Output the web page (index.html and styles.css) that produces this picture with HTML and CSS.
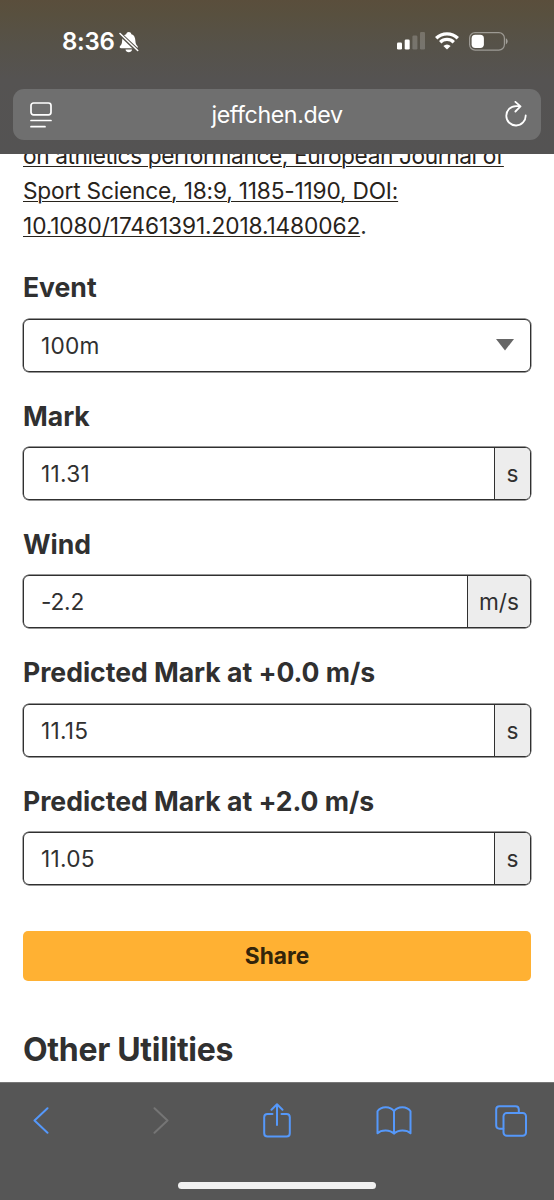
FILE: index.html
```html
<!DOCTYPE html>
<html lang="en">
<head>
<meta charset="utf-8">
<title>jeffchen.dev</title>
<link rel="stylesheet" href="styles.css">
</head>
<body>
<div class="phone">
  <header class="top">
    <div class="status">
      <div class="clock">
        <span class="time">8:36</span>
        <svg class="bell" width="20" height="21" viewBox="0 0 20 21"><path fill="#fff" d="M2.2 16.2c-1.5 0-2-1.1-1.1-2.1 1.4-1.6 1.8-2.6 2-5.1C3.3 5 4.400 3 7.200 2.200 7.600.700 8.400 0 9.800 0s2.200.700 2.600 2.200c2.800.800 3.800 2.800 4 6.800.200 2.500.700 3.500 2 5.100.9 1 .4 2.100-1.100 2.100zM6.500 17.600h6.600c-.3 1.700-1.600 2.700-3.300 2.700s-3-1-3.300-2.700z"/><path stroke="#56524a" stroke-width="3.800" d="M0 1l19.500 18.500"/><path stroke="#fff" stroke-width="1.500" stroke-linecap="round" d="M1 1.500l17.700 17"/></svg>
      </div>
      <div class="signals">
        <svg width="28" height="18" viewBox="0 0 28 18" fill="#fff"><rect y="10.500" width="5" height="7" rx="1.300"/><rect x="7.700" y="7.500" width="5" height="10" rx="1.300"/><rect x="15.400" y="3.500" width="5" height="14" rx="1.300" opacity=".2"/><rect x="23" width="5" height="17.500" rx="1.300" opacity=".2"/></svg>
        <svg width="24" height="18" viewBox="0 0 24 18" fill="none" stroke="#fff" stroke-width="3.300"><path d="M1.200 6.300a15.400 15.400 0 0 1 21.600 0M5.200 10.200a9.800 9.800 0 0 1 13.600 0"/><path fill="#fff" stroke="none" d="M12 17.600l-3.600-3.500a5 5 0 0 1 7.200 0z"/></svg>
        <svg width="39" height="19" viewBox="0 0 39 19"><rect x=".6" y=".6" width="34.800" height="17.500" rx="5.500" fill="none" stroke="#fff" stroke-opacity=".42" stroke-width="1.200"/><rect x="2.600" y="2.700" width="12.300" height="13.200" rx="3.700" fill="#fff"/><path fill="#fff" fill-opacity=".45" d="M36.800 6.300c2.400 1.100 2.400 5 0 6.100z"/></svg>
      </div>
    </div>
    <div class="address">
      <svg width="22" height="26" viewBox="0 0 22 26" fill="none" stroke="#fff" stroke-width="1.700" stroke-linecap="round"><rect x="1" y="1" width="20" height="11.800" rx="2.500"/><path d="M1 18.500h20M1 24.700h14"/></svg>
      <span class="host">jeffchen.dev</span>
      <svg width="22" height="28" viewBox="0 0 22 28" fill="none" stroke="#fff" stroke-width="1.800" stroke-linecap="round" stroke-linejoin="round"><path d="M15.300 5.100H11A9.700 9.700 0 1 0 20.700 14.500M10.400.9l5.100 4.500-5.100 5.100"/></svg>
    </div>
  </header>
  <main class="page">
    <p class="citation"><a class="link"><span class="tight">on athletics performance, European Journal of</span><br>Sport Science, 18:9, 1185-1190, DOI:<br><span class="digits">10.1080/17461391.2018.1480062</span></a>.</p>
    <div class="field"><label class="label">Event</label>
      <div class="box"><span class="value">100m</span><svg class="caret" width="18" height="12" viewBox="0 0 18 12"><path fill="#666" d="M0 0h18L9 11.500z"/></svg></div></div>
    <div class="field"><label class="label">Mark</label>
      <div class="box"><span class="value">11.31</span><span class="unit">s</span></div></div>
    <div class="field"><label class="label">Wind</label>
      <div class="box"><span class="value value-signed">-2.2</span><span class="unit unit-wide">m/s</span></div></div>
    <div class="field"><label class="label">Predicted Mark at +0.0 m/s</label>
      <div class="box"><span class="value">11.15</span><span class="unit">s</span></div></div>
    <div class="field"><label class="label">Predicted Mark at +2.0 m/s</label>
      <div class="box"><span class="value">11.05</span><span class="unit">s</span></div></div>
    <button class="share">Share</button>
    <h2 class="heading">Other Utilities</h2>
  </main>
  <footer class="toolbar">
    <nav class="actions">
      <svg width="16" height="27" viewBox="0 0 16 27"><path d="M14.500 1.200L1.500 13.500l13 12.300"/></svg>
      <svg class="disabled" width="16" height="27" viewBox="0 0 16 27"><path d="M1.500 1.200l13 12.300-13 12.300"/></svg>
      <svg width="28" height="35" viewBox="0 0 28 35"><path d="M9.500 11H4.500Q1.200 11 1.200 14.300V30.200Q1.200 33.500 4.500 33.500h19Q26.800 33.500 26.800 30.200V14.300Q26.800 11 23.500 11h-5M14 22V1.500M8.500 6.800L14 1.300l5.500 5.500"/></svg>
      <svg width="36" height="29" viewBox="0 0 36 29"><path d="M18 5.200C14.500-.2 5-.2 1.500 5.200v22C5.200 23.500 14 23.300 18 27.700 22 23.300 30.800 23.500 34.500 27.200v-22C31-.2 21.500-.2 18 5.200v22"/></svg>
      <svg width="32" height="32" viewBox="0 0 32 32"><path d="M8.300 23.700H4.500Q1.200 23.700 1.200 20.400V4.500Q1.200 1.200 4.500 1.200h16Q23.800 1.200 23.800 4.500V8"/><rect x="8.500" y="8" width="22.500" height="22.700" rx="3.300"/></svg>
    </nav>
    <div class="home"></div>
  </footer>
</div>
</body>
</html>
```
FILE: styles.css
```css
* { box-sizing: border-box; }
body { margin: 0; background: #fff; color: #303030; font-family: Inter, sans-serif; }
svg { display: block; flex: none; }
.phone { width: 554px; height: 1200px; display: flex; flex-direction: column; overflow: hidden; }

.top { flex: none; height: 154px; padding: 0 13px; background: linear-gradient(#5a4e3c 0, #58503f 15px, #565249 45px, #555352 80px, #545353 100%); color: #fff; }
.status { height: 89px; padding: 32px 33px 0 49px; display: flex; justify-content: space-between; align-items: flex-start; }
.clock { display: flex; gap: 5px; }
.time { font-size: 24px; line-height: 19px; font-weight: 600; width: 52px; white-space: nowrap; letter-spacing: -0.3px; }
.signals { display: flex; gap: 10px; }
.address { height: 51px; padding: 0 14px 0 17px; border-radius: 11px; background: #6f6f6f; display: flex; align-items: center; justify-content: space-between; }
.host { font-size: 23.2px; line-height: 30px; letter-spacing: -0.4px; margin-right: 3px; }

.page { flex: none; height: 928px; padding: 0 23px; overflow: hidden; }
.citation { margin: -16.5px 0 27px; font-size: 22.7px; line-height: 35.2px; letter-spacing: -0.19px; white-space: nowrap; }
.link { text-decoration: underline; text-decoration-thickness: 1.4px; text-underline-offset: 2px; color: #28231b; }
.tight { letter-spacing: -0.4px; }
.digits { letter-spacing: -0.1px; }
.field { height: 128.4px; }
.label { display: block; height: 48.4px; font-size: 26.6px; line-height: 34px; font-weight: 700; letter-spacing: -0.03px; white-space: nowrap; }
.box { height: 53px; border: 1px solid #303030; box-shadow: 0 0 0 0.4px #303030; border-radius: 6px; display: flex; align-items: stretch; overflow: hidden; font-size: 22.7px; line-height: 52px; }
.value { flex: 1; padding-left: 17px; letter-spacing: 0.25px; }
.value-signed { letter-spacing: -0.2px; }
.caret { align-self: center; margin-right: 16px; }
.unit { width: 36px; background: #ededed; border-left: 1px solid #303030; text-align: center; }
.unit-wide { width: 63px; }
.share { display: block; width: 100%; height: 50px; margin-top: 18.5px; padding: 0; border: 0; border-radius: 5px; background: #ffb133; color: #33240a; font: 700 22.7px/50px Inter, sans-serif; }
.heading { margin: 48.5px 0 0; font-size: 32px; line-height: 42px; font-weight: 700; letter-spacing: -0.3px; }

.toolbar { flex: none; height: 118px; background: #565656; display: flex; flex-direction: column; align-items: center; border-top: 1px solid #777; }
.actions { width: 100%; height: 75px; display: grid; grid-template-columns: 82px 158px 74px 160px 74px; justify-items: center; align-items: center; fill: none; stroke: #5598fa; stroke-width: 2; stroke-linejoin: round; stroke-linecap: round; }
.disabled { stroke: #757575; }
.home { width: 198px; height: 7px; margin-top: 24px; border-radius: 4px; background: #f0f0f0; }
```
